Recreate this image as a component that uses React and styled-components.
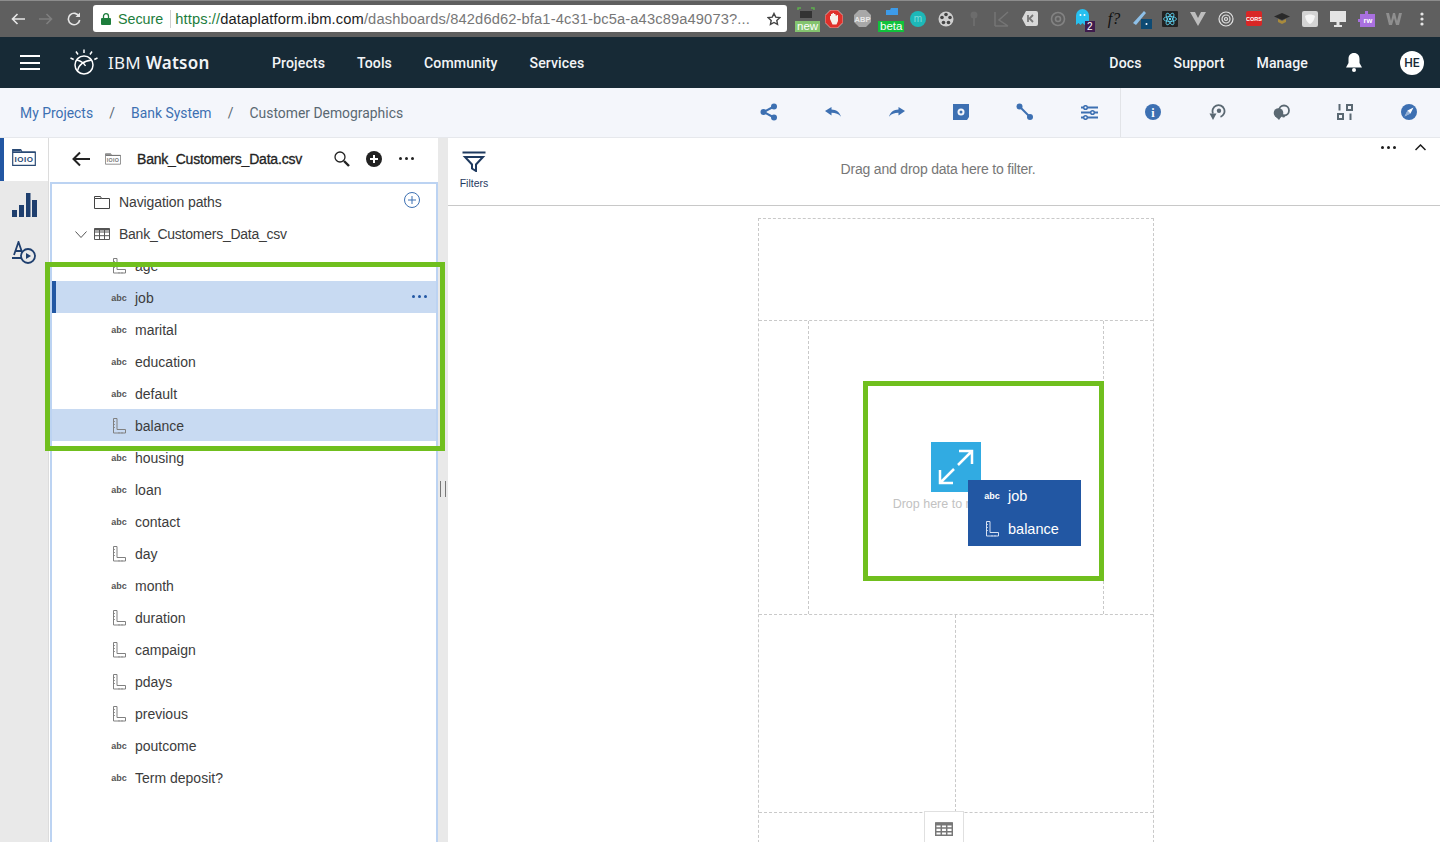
import React from "react";
import styled, { createGlobalStyle } from "styled-components";

const GlobalStyle = createGlobalStyle`
  html, body {
    margin: 0;
    height: 100%;
    overflow: hidden;
    background: #fff;
  }
  * { box-sizing: border-box; }
`;

const Page = styled.div`
  width: 1440px;
  height: 842px;
  display: flex;
  flex-direction: column;
  overflow: hidden;
  font-family: "Liberation Sans", Arial, sans-serif;
`;

/* browser chrome */
const Chrome = styled.div`
  height: 37px;
  flex: none;
  display: flex;
  align-items: center;
  padding: 0 4px 1px 4px;
  background: #5f5f5f;
  border-top: 1px solid #8c8c8c;
`;

const ChromeButton = styled.div`
  width: 28px;
  height: 28px;
  display: flex;
  align-items: center;
  justify-content: center;
  color: ${(p) => (p.$dim ? "#7f7f7f" : "#e6e6e6")};
`;

const UrlBar = styled.div`
  width: 695px;
  height: 27px;
  margin-left: 5px;
  margin-right: 5px;
  padding: 0 6px 0 8px;
  display: flex;
  align-items: center;
  background: #fff;
  border-radius: 3px;
  white-space: nowrap;
`;

const Secure = styled.span`
  color: #1d7d3c;
  margin-left: 7px;
  padding-right: 7px;
  border-right: 1px solid #cfcfcf;
  font-size: 14.3px;
  line-height: 18px;
`;

const Url = styled.span`
  margin-left: 4px;
  flex: 1;
  overflow: hidden;
  color: #777;
  font-size: 14.7px;
  letter-spacing: 0.12px;
`;

const UrlScheme = styled.span`
  color: #1d7d3c;
`;

const UrlHost = styled.span`
  color: #1c1c1c;
`;

const Extensions = styled.div`
  display: flex;
  align-items: center;
`;

const Ext = styled.div`
  width: 28px;
  height: 28px;
  display: flex;
  align-items: center;
  justify-content: center;
  position: relative;
`;

const ExtTag = styled.span`
  position: absolute;
  left: ${(p) => p.$left}px;
  bottom: 1px;
  padding: 0 2px;
  height: ${(p) => p.$h || 11}px;
  line-height: ${(p) => p.$h || 11}px;
  font-size: ${(p) => p.$size || 11.5}px;
  color: #fff;
  background: ${(p) => p.$bg};
`;

/* nav */
const Nav = styled.header`
  height: 51px;
  flex: none;
  display: flex;
  align-items: center;
  background: #172a36;
  color: #f2f4f6;
  font-family: Roboto, sans-serif;
`;

const Burger = styled.div`
  width: 20px;
  height: 15px;
  margin-left: 20px;
  margin-right: 29px;
  border-top: 2px solid #fff;
  border-bottom: 2px solid #fff;
  display: flex;
  align-items: center;
  &::before {
    content: "";
    display: block;
    width: 100%;
    height: 2px;
    background: #fff;
  }
`;

const Brand = styled.div`
  margin-left: 9px;
  width: 164px;
  font-family: "Noto Sans", sans-serif;
  font-size: 17px;
  font-weight: 400;
  letter-spacing: 0.25px;
  white-space: nowrap;
  b { font-weight: 600; }
`;

const NavLinks = styled.nav`
  display: flex;
  gap: 32px;
  font-size: 14.1px;
  font-weight: 500;
  letter-spacing: 0.1px;
  ${(p) => p.$right && "margin-left: auto;"}
`;

const Bell = styled.div`
  margin-left: 36px;
  width: 20px;
  display: flex;
  justify-content: center;
`;

const Avatar = styled.div`
  width: 24px;
  height: 24px;
  margin-left: 36px;
  margin-right: 16px;
  border-radius: 50%;
  background: #fff;
  color: #172a36;
  font-size: 12px;
  font-weight: 500;
  display: flex;
  align-items: center;
  justify-content: center;
`;

/* breadcrumb */
const CrumbBar = styled.div`
  height: 50px;
  flex: none;
  display: flex;
  align-items: center;
  padding-left: 20px;
  background: #f4f6fb;
  border-bottom: 1px solid #e6e8ec;
  font-family: Roboto, sans-serif;
  font-size: 13.9px;
`;

const Crumb = styled.span`
  color: ${(p) => (p.$current ? "#5a6872" : "#3d70b2")};
  white-space: nowrap;
`;

const CrumbSep = styled.span`
  color: #5a6872;
  width: 38px;
  text-align: center;
`;

const Toolbar = styled.div`
  margin-left: auto;
  margin-right: -1px;
  display: flex;
  height: 100%;
`;

const ToolGroup = styled.div`
  display: flex;
  ${(p) => p.$divided && "box-shadow: inset -1px 0 0 #e2e4e8;"}
`;

const ToolButton = styled.div`
  width: 64px;
  flex: none;
  display: flex;
  align-items: center;
  justify-content: center;
  padding-bottom: 1px;
  color: ${(p) => (p.$muted ? "#5a6872" : "#3d70b2")};
`;

/* body */
const Body = styled.div`
  flex: 1;
  min-height: 0;
  display: flex;
`;

const Rail = styled.div`
  width: 49px;
  flex: none;
  background: #e9e9e9;
  border-right: 1px solid #dcdcdc;
  display: flex;
  flex-direction: column;
`;

const RailItem = styled.div`
  height: ${(p) => p.$h}px;
  display: flex;
  align-items: center;
  justify-content: center;
  color: #1f3f6e;
  ${(p) => p.$active && `background: #fff; border-left: 4px solid #2257a3; padding: 0 4px 4px 0;`}
`;

const Panel = styled.aside`
  width: 389px;
  flex: none;
  position: relative;
  display: flex;
  flex-direction: column;
  background: #fff;
`;

const PanelHead = styled.div`
  height: 44px;
  flex: none;
  padding-bottom: 3px;
  display: flex;
  align-items: center;
  color: #222;
`;

const HeadIcon = styled.div`
  width: 32px;
  display: flex;
  justify-content: center;
  margin-left: ${(p) => p.$ml || 0}px;
`;

const FileName = styled.div`
  width: 189px;
  margin-left: 8px;
  font-size: 14px;
  letter-spacing: -0.2px;
  -webkit-text-stroke: 0.3px #222;
  white-space: nowrap;
  color: #222;
`;

const Tree = styled.div`
  flex: 1;
  margin-left: 1px;
  padding-top: 1px;
  border: 2px solid #bcd3f2;
  border-bottom: 0;
`;

const Row = styled.div`
  height: 32px;
  padding-top: 2px;
  position: relative;
  display: flex;
  align-items: center;
  color: #3c3c3c;
  font-size: 14px;
  background: ${(p) => (p.$selected ? "#c8daf2" : "transparent")};
  ${(p) => p.$marked && "box-shadow: inset 4px 0 0 #2257a3;"}
`;

const RowIcon = styled.div`
  width: ${(p) => p.$w || 24}px;
  margin-left: ${(p) => p.$ml}px;
  flex: none;
  display: flex;
  justify-content: center;
  color: #777;
`;

const TypeLabel = styled.span`
  font-size: 9px;
  font-weight: 700;
  color: ${(p) => (p.$light ? "#fff" : "#555")};
`;

const FieldName = styled.span`
  margin-left: ${(p) => p.$ml}px;
  letter-spacing: ${(p) => p.$track || 0}px;
`;

const RowAction = styled.div`
  margin-left: auto;
  margin-right: ${(p) => p.$mr}px;
  margin-bottom: ${(p) => p.$mb || 0}px;
  display: flex;
  color: #2257a3;
`;

const Highlight = styled.div`
  position: absolute;
  z-index: 2;
  border: 5px solid #70bf1e;
  pointer-events: none;
  left: ${(p) => p.$left}px;
  top: ${(p) => p.$top}px;
  width: ${(p) => p.$width}px;
  height: ${(p) => p.$height}px;
`;

const Splitter = styled.div`
  width: 10px;
  flex: none;
  background: #e9e9e9;
  display: flex;
  align-items: center;
  justify-content: center;
  &::before {
    content: "";
    width: 4px;
    height: 16px;
    border-left: 1px solid #777;
    border-right: 1px solid #777;
    position: relative;
    top: -1px;
  }
`;

const Main = styled.main`
  flex: 1;
  min-width: 0;
  display: flex;
  flex-direction: column;
  background: #fff;
`;

const FilterBar = styled.div`
  height: 68px;
  flex: none;
  display: flex;
  border-bottom: 1px solid #c8c8c8;
`;

const FilterButton = styled.div`
  width: 52px;
  padding-top: 13px;
  display: flex;
  flex-direction: column;
  align-items: center;
  gap: 5px;
  font-size: 10.5px;
  color: #1f3a5f;
`;

const FilterHint = styled.div`
  flex: 1;
  padding-top: 23px;
  text-align: center;
  font-size: 14px;
  letter-spacing: -0.2px;
  color: #777;
`;

const FilterActions = styled.div`
  display: flex;
  gap: 8px;
  padding: 6px 8px 0 0;
  height: 13px;
`;

const ActionIcon = styled.div`
  width: 24px;
  height: 7px;
  display: flex;
  align-items: center;
  justify-content: center;
  color: #1c1c1c;
`;

const Canvas = styled.div`
  flex: 1;
  min-height: 0;
  overflow: hidden;
  padding: 12px 0 0 310px;
`;

const Template = styled.div`
  width: 396px;
  height: 640px;
  display: flex;
  flex-direction: column;
  border: 1px dashed #c9c9c9;
  border-bottom: 0;
`;

const TemplateRow = styled.div`
  height: ${(p) => p.$h}px;
  flex: none;
  display: flex;
  position: relative;
  ${(p) => p.$ruled && "border-top: 1px dashed #c9c9c9;"}
`;

const Cell = styled.div`
  position: relative;
  flex: ${(p) => (p.$w ? `0 0 ${p.$w}px` : "1")};
  ${(p) => p.$ruled && "border-left: 1px dashed #c9c9c9;"}
`;

const CenterCell = styled(Cell)`
  display: flex;
  flex-direction: column;
  align-items: center;
  padding: 121px 1px 0 0;
  gap: 5px;
`;

const MaximizeBox = styled.div`
  width: 50px;
  height: 50px;
  display: flex;
  align-items: center;
  justify-content: center;
  background: #31abe2;
`;

const DropText = styled.div`
  font-size: 12.5px;
  color: #c2c2c2;
  white-space: nowrap;
`;

const DragGhost = styled.div`
  position: absolute;
  left: 159px;
  top: 159px;
  width: 113px;
  height: 66px;
  background: #2257a3;
  color: #fff;
  font-size: 14.5px;
`;

const GhostRow = styled.div`
  height: 33px;
  padding-bottom: 2px;
  display: flex;
  align-items: center;
`;

const TableTab = styled.div`
  position: absolute;
  left: 165px;
  top: -2px;
  width: 40px;
  height: 34px;
  background: #fff;
  border: 1px solid #e0e0e0;
  border-bottom: 0;
  display: flex;
  align-items: center;
  justify-content: center;
`;

/* icons */
const Dots = ({ size = 3, gap = 3 }) => (
  <svg width={size * 3 + gap * 2} height={size} fill="currentColor">
    {[0, 1, 2].map((i) => (
      <circle key={i} cx={size / 2 + i * (size + gap)} cy={size / 2} r={size / 2} />
    ))}
  </svg>
);

const FieldIcon = ({ color = "#808080" }) => (
  <svg width="13" height="16" viewBox="0 0 13 16" fill="none" stroke={color} strokeWidth="1">
    <path d="M.5.5h3.500v11h8.500v3.500h-12z" />
    <path d="M.5 3.500h1.500M.5 6.500h1.500M.5 9.500h1.500M6 15.500V14M9 15.500V14" strokeWidth=".8" />
  </svg>
);

const FolderData = ({ color, w = 24, h = 17 }) => (
  <svg width={w} height={h} viewBox="0 0 24 17" fill="none" stroke={color}>
    <path d="M.7 3V.7h8L10 3h13.300v13.300H.7z" fill="#fff" strokeWidth="1.200" />
    <path d="M.7 3.200h22.600M.7 1.500h8" strokeWidth="1.600" />
    <text x="12" y="13" textAnchor="middle" fontFamily="Liberation Sans, sans-serif" fontSize="8" fontWeight="700" letterSpacing=".5" fill={color} stroke="none">IOIO</text>
  </svg>
);

const Share = () => (
  <svg width="18" height="18" viewBox="0 0 18 18" fill="currentColor">
    <circle cx="14" cy="3.500" r="3" /><circle cx="3.500" cy="9" r="3" /><circle cx="14" cy="14.500" r="3" />
    <path d="M14 3.500 3.500 9 14 14.500" fill="none" stroke="currentColor" strokeWidth="2" />
  </svg>
);

const Reply = ({ flip }) => (
  <svg width="16" height="10" viewBox="0 0 16 10" fill="currentColor" style={flip ? { transform: "scaleX(-1)" } : undefined}>
    <path d="M0 4 6.500 0v2.600c4.600.2 8 2.200 9.500 7.200-2.400-3-5.300-4-9.500-4V8.500z" />
  </svg>
);

const CameraBox = () => (
  <svg width="16" height="16" viewBox="0 0 16 16" fill="currentColor">
    <path d="M0 0h16v13l-2 3H0z" />
    <circle cx="8" cy="8" r="3.500" fill="#f4f6fb" /><circle cx="8" cy="8" r="1.500" />
  </svg>
);

const Connect = () => (
  <svg width="18" height="18" viewBox="0 0 18 18" fill="currentColor">
    <circle cx="3.500" cy="3.500" r="3" /><circle cx="14" cy="14" r="3" />
    <path d="M3.500 3.500 14 14" stroke="currentColor" strokeWidth="2" />
  </svg>
);

const Sliders = () => (
  <svg width="17" height="15" viewBox="0 0 17 15" fill="none" stroke="currentColor" strokeWidth="1.800">
    <path d="M0 2.500h17M0 7.500h17M0 12.500h17" />
    <g fill="#f4f6fb" strokeWidth="1.500"><circle cx="4.500" cy="2.500" r="1.800" /><circle cx="11.500" cy="7.500" r="1.800" /><circle cx="4.500" cy="12.500" r="1.800" /></g>
  </svg>
);

const Info = () => (
  <svg width="16" height="16" viewBox="0 0 16 16">
    <circle cx="8" cy="8" r="8" fill="currentColor" />
    <text x="8" y="12.500" textAnchor="middle" fontFamily="Liberation Serif, serif" fontWeight="700" fontSize="12" fill="#fff">i</text>
  </svg>
);

const Rewind = () => (
  <svg width="17" height="16" viewBox="0 0 17 16" fill="none" stroke="currentColor" strokeWidth="1.800">
    <path d="M4 9.500a6 6 0 1 1 7.500 3.300" />
    <circle cx="10" cy="6.800" r="2.200" fill="currentColor" stroke="none" />
    <path d="M.5 9.500h7L4 16z" fill="currentColor" stroke="none" />
  </svg>
);

const Bubble = () => (
  <svg width="17" height="16" viewBox="0 0 17 16" fill="currentColor">
    <circle cx="11" cy="6.500" r="5" fill="none" stroke="currentColor" strokeWidth="1.800" />
    <circle cx="5.500" cy="9" r="4.800" />
    <path d="M3 13h5l-2 3z" />
    <circle cx="10.500" cy="12" r="1.500" />
  </svg>
);

const BinaryGrid = () => (
  <svg width="16" height="16" viewBox="0 0 16 16" fill="none" stroke="currentColor" strokeWidth="2">
    <path d="M2.500 0v6.500" /><rect x="10" y="1" width="5" height="5" />
    <rect x="1" y="10" width="5" height="5" /><path d="M13.500 9.500V16" />
  </svg>
);

const Compass = () => (
  <svg width="16" height="16" viewBox="0 0 16 16">
    <circle cx="8" cy="8" r="8" fill="currentColor" />
    <path d="M12.500 3.500 9.500 9.500 3.500 12.500 6.500 6.500z" fill="#fff" />
    <path d="M9.500 9.500 3.500 12.500 6.500 6.500z" fill="currentColor" opacity=".55" />
  </svg>
);

const WatsonLogo = () => (
  <svg width="30" height="30" viewBox="0 0 30 30" fill="none" stroke="#fff" strokeWidth="1.500">
    <circle cx="15" cy="17" r="9" />
    <path d="M8.500 23c1-6 6-10 14.500-11" strokeWidth="1.300" />
    <path d="M8 12c4 1 7 3 8.500 6" strokeWidth="1.300" />
    <path d="M15 1.500v3.500M7 3.500l2 3M23 3.500l-2 3M1.500 10l3.200 1.500M28.500 10l-3.200 1.500" />
  </svg>
);

const Lock = () => (
  <svg width="10" height="12" viewBox="0 0 10 12" fill="#1d7d3c">
    <rect y="5" width="10" height="7" rx="1" />
    <path d="M2.500 5V3.200a2.500 2.500 0 0 1 5 0V5" fill="none" stroke="#1d7d3c" strokeWidth="1.300" />
  </svg>
);

const Extension = ({ id }) => {
  switch (id) {
    case "new":
      return (
        <Ext>
          <svg width="18" height="11" viewBox="0 0 18 11" style={{ marginBottom: 12 }}>
            <path d="M3 4h12v7H3z" fill="#333" /><path d="M1 3V1h3M17 3V1h-3" stroke="#5fae4f" strokeWidth="1.500" fill="none" />
          </svg>
          <ExtTag $left={3} $bg="#84c46f">new</ExtTag>
        </Ext>
      );
    case "stop":
      return (
        <Ext>
          <svg width="18" height="18" viewBox="0 0 18 18">
            <path d="M5.500 0h7L18 5.500v7L12.500 18h-7L0 12.500v-7z" fill="#e0302a" stroke="#e6e6e6" strokeWidth=".6" />
            <path d="M5 9V6h1V4h1.500V3H9v1h1.500v1.500H12V5h1v6l-1.500 3.500H7.500z" fill="#f6f0ea" />
          </svg>
        </Ext>
      );
    case "abp":
      return (
        <Ext>
          <svg width="17" height="17" viewBox="0 0 17 17">
            <path d="M5 0h7l5 5v7l-5 5H5l-5-5V5z" fill="#a8a8a8" />
            <text x="8.500" y="11.500" textAnchor="middle" fontFamily="Liberation Sans, sans-serif" fontSize="7.500" fontWeight="700" fill="#e8e8e8">ABP</text>
          </svg>
        </Ext>
      );
    case "beta":
      return (
        <Ext>
          <svg width="12" height="7" viewBox="0 0 12 7" style={{ marginBottom: 14, marginLeft: 4 }}>
            <path d="M0 7V2h4l1-2h7v7z" fill="#3d9be9" />
          </svg>
          <ExtTag $left={2} $bg="#11c23c">beta</ExtTag>
        </Ext>
      );
    case "m":
      return (
        <Ext>
          <svg width="16" height="16" viewBox="0 0 16 16">
            <circle cx="8" cy="8" r="8" fill="#1db8b8" />
            <text x="8" y="11" textAnchor="middle" fontFamily="Liberation Sans, sans-serif" fontSize="10" fill="#7fdcdc">m</text>
          </svg>
        </Ext>
      );
    case "film":
      return (
        <Ext>
          <svg width="16" height="16" viewBox="0 0 16 16">
            <circle cx="8" cy="8" r="7.500" fill="#cfcfcf" />
            {[[8, 3.500], [12, 6.500], [10.500, 11.500], [5.500, 11.500], [4, 6.500]].map(([x, y]) => (
              <circle key={x + "" + y} cx={x} cy={y} r="1.800" fill="#444" />
            ))}
          </svg>
        </Ext>
      );
    case "faint":
      return (
        <Ext>
          <svg width="8" height="15" viewBox="0 0 8 15" fill="#6c6c6c">
            <circle cx="4" cy="4" r="3.500" /><path d="M3 6h2v9H3z" />
          </svg>
        </Ext>
      );
    case "k":
      return (
        <Ext>
          <svg width="16" height="16" viewBox="0 0 16 16" fill="none" stroke="#767676" strokeWidth="1.500">
            <path d="M1 1v14M14 1 5 9l9 6M1 15h13" />
          </svg>
        </Ext>
      );
    case "kw":
      return (
        <Ext>
          <svg width="16" height="15" viewBox="0 0 16 15">
            <path d="M4 0h10a2 2 0 0 1 2 2v11a2 2 0 0 1-2 2H4L0 7.500z" fill="#d8d8d8" />
            <path d="M6 4v7M11 4 7.500 7.500 11 11" stroke="#777" strokeWidth="1.800" fill="none" />
          </svg>
        </Ext>
      );
    case "ring":
      return (
        <Ext>
          <svg width="16" height="16" viewBox="0 0 16 16" fill="none" stroke="#838383" strokeWidth="1.600">
            <circle cx="8" cy="8" r="6.500" /><circle cx="8" cy="8" r="2.500" />
          </svg>
        </Ext>
      );
    case "ghost":
      return (
        <Ext>
          <svg width="13" height="16" viewBox="0 0 13 16" style={{ marginRight: 7, marginBottom: 3 }}>
            <path d="M0 16V6.500a6.500 6.500 0 0 1 13 0V16l-2.500-2-2 2-2-2-2 2-2-2z" fill="#27c0f0" />
            <circle cx="4.500" cy="6" r="1" fill="#fff" /><circle cx="8.500" cy="6" r="1" fill="#fff" />
          </svg>
          <ExtTag $left={13} $bg="#3e1b4d" $size={10}>2</ExtTag>
        </Ext>
      );
    case "f":
      return (
        <Ext>
          <svg width="18" height="18" viewBox="0 0 18 18">
            <text x="9" y="14" textAnchor="middle" fontFamily="Liberation Serif, serif" fontStyle="italic" fontSize="16" fill="#111">f?</text>
          </svg>
        </Ext>
      );
    case "pen":
      return (
        <Ext>
          <svg width="19" height="20" viewBox="0 0 19 20">
            <path d="M0 14 11 2l2 2L3 16z" fill="#8ec0e8" />
            <rect x="8" y="10" width="11" height="10" fill="#0e4a73" />
            <circle cx="13.500" cy="15" r="1" fill="#fff" />
          </svg>
        </Ext>
      );
    case "react":
      return (
        <Ext>
          <svg width="16" height="16" viewBox="0 0 16 16" fill="none" stroke="#61dafb" strokeWidth=".8">
            <rect width="16" height="16" rx="1" fill="#222" stroke="none" />
            <ellipse cx="8" cy="8" rx="6.500" ry="2.500" />
            <ellipse cx="8" cy="8" rx="6.500" ry="2.500" transform="rotate(60 8 8)" />
            <ellipse cx="8" cy="8" rx="6.500" ry="2.500" transform="rotate(120 8 8)" />
            <circle cx="8" cy="8" r="1.200" fill="#61dafb" stroke="none" />
          </svg>
        </Ext>
      );
    case "v":
      return (
        <Ext>
          <svg width="16" height="14" viewBox="0 0 16 14">
            <path d="M0 0h5l3 6 3-6h5L8 14z" fill="#bdbdbd" />
          </svg>
        </Ext>
      );
    case "target":
      return (
        <Ext>
          <svg width="16" height="16" viewBox="0 0 16 16" fill="none" stroke="#e2e2e2" strokeWidth="1.200">
            <circle cx="8" cy="8" r="7" /><circle cx="8" cy="8" r="4" /><circle cx="8" cy="8" r="1.500" />
          </svg>
        </Ext>
      );
    case "cors":
      return (
        <Ext>
          <svg width="16" height="15" viewBox="0 0 16 15">
            <rect width="16" height="15" rx="2" fill="#d92626" />
            <text x="8" y="10" textAnchor="middle" fontFamily="Liberation Sans, sans-serif" fontSize="5.500" fontWeight="700" fill="#fff">CORS</text>
          </svg>
        </Ext>
      );
    case "cap":
      return (
        <Ext>
          <svg width="16" height="11" viewBox="0 0 16 11">
            <path d="M8 0l8 3.500L8 7 0 3.500z" fill="#2a2a2a" /><path d="M4 6v3l4 2 4-2V6L8 8z" fill="#a88a3c" />
          </svg>
        </Ext>
      );
    case "square":
      return (
        <Ext>
          <svg width="16" height="16" viewBox="0 0 16 16">
            <rect width="16" height="16" rx="2" fill="#d4d4d4" />
            <path d="M3 5c3-2 7-2 10 0-1 5-3 7-5 8-2-1-4-3-5-8z" fill="#f5f5f5" />
          </svg>
        </Ext>
      );
    case "monitor":
      return (
        <Ext>
          <svg width="16" height="16" viewBox="0 0 16 16" fill="#e4e4e4">
            <path d="M0 0h16v11H0zM6.500 11h3v3h-3zM4 14h8v2H4z" />
          </svg>
        </Ext>
      );
    case "puzzle":
      return (
        <Ext>
          <svg width="17" height="17" viewBox="0 0 17 17">
            <path d="M2 4h5V1h3v3h7v13H2v-5H0V9h2z" fill="#a970e0" />
            <text x="10" y="13" textAnchor="middle" fontFamily="Liberation Sans, sans-serif" fontSize="7.500" fontWeight="700" fill="#fff">rw</text>
          </svg>
        </Ext>
      );
    case "w":
      return (
        <Ext>
          <svg width="16" height="12" viewBox="0 0 16 12" fill="#8f8f8f">
            <path d="M0 0h3l2 8 2-8h2l2 8 2-8h3l-3 12h-3L8 5l-2 7H3z" />
          </svg>
        </Ext>
      );
    default:
      return (
        <Ext>
          <svg width="4" height="14" viewBox="0 0 4 14" fill="#e6e6e6">
            <circle cx="2" cy="2" r="1.600" /><circle cx="2" cy="7" r="1.600" /><circle cx="2" cy="12" r="1.600" />
          </svg>
        </Ext>
      );
  }
};

const extensionIds = [
  "new", "stop", "abp", "beta", "m", "film", "faint", "k", "kw", "ring", "ghost", "f",
  "pen", "react", "v", "target", "cors", "cap", "square", "monitor", "puzzle", "w", "menu",
];

const fields = [
  { name: "age", num: true },
  { name: "job", selected: true, marked: true },
  { name: "marital" },
  { name: "education" },
  { name: "default" },
  { name: "balance", num: true, selected: true },
  { name: "housing" },
  { name: "loan" },
  { name: "contact" },
  { name: "day", num: true },
  { name: "month" },
  { name: "duration", num: true },
  { name: "campaign", num: true },
  { name: "pdays", num: true },
  { name: "previous", num: true },
  { name: "poutcome" },
  { name: "Term deposit?" },
];

export default function App() {
  return (
    <Page>
      <GlobalStyle />
      <Chrome>
        <ChromeButton>
          <svg width="14" height="12" viewBox="0 0 14 12" fill="none" stroke="currentColor" strokeWidth="1.600"><path d="M14 6H1.500M6.500 1l-5 5 5 5" /></svg>
        </ChromeButton>
        <ChromeButton $dim>
          <svg width="14" height="12" viewBox="0 0 14 12" fill="none" stroke="currentColor" strokeWidth="1.600"><path d="M0 6h12.500M7.500 1l5 5-5 5" /></svg>
        </ChromeButton>
        <ChromeButton>
          <svg width="14" height="14" viewBox="0 0 14 14" fill="none" stroke="currentColor" strokeWidth="1.600"><path d="M12.200 4.500A5.700 5.700 0 1 0 12.700 8" /><path d="M13 .5v4.500H8.500" fill="currentColor" stroke="none" /></svg>
        </ChromeButton>
        <UrlBar>
          <Lock />
          <Secure>Secure</Secure>
          <Url>
            <UrlScheme>https://</UrlScheme>
            <UrlHost>dataplatform.ibm.com</UrlHost>/dashboards/842d6d62-bfa1-4c31-bc5a-a43c89a49073?...
          </Url>
          <svg width="14" height="14" viewBox="0 0 24 24" fill="none" stroke="#444" strokeWidth="2.400"><path d="m12 2.500 3 6.300 6.800.9-5 4.700 1.300 6.800-6.100-3.300-6.100 3.300 1.300-6.800-5-4.700 6.800-.9z" /></svg>
        </UrlBar>
        <Extensions>
          {extensionIds.map((id) => (
            <Extension key={id} id={id} />
          ))}
        </Extensions>
      </Chrome>

      <Nav>
        <Burger />
        <WatsonLogo />
        <Brand>IBM <b>Watson</b></Brand>
        <NavLinks>
          <span>Projects</span>
          <span>Tools</span>
          <span>Community</span>
          <span>Services</span>
        </NavLinks>
        <NavLinks $right>
          <span>Docs</span>
          <span>Support</span>
          <span>Manage</span>
        </NavLinks>
        <Bell>
          <svg width="16" height="19" viewBox="0 0 16 19" fill="#fff"><path d="M8 0c3.500 0 5.500 2.500 5.500 6v4l2.500 4.500H0L2.500 10V6C2.500 2.500 4.500 0 8 0z" /><circle cx="8" cy="17" r="2" /></svg>
        </Bell>
        <Avatar>HE</Avatar>
      </Nav>

      <CrumbBar>
        <Crumb>My Projects</Crumb>
        <CrumbSep>/</CrumbSep>
        <Crumb>Bank System</Crumb>
        <CrumbSep>/</CrumbSep>
        <Crumb $current>Customer Demographics</Crumb>
        <Toolbar>
          <ToolGroup $divided>
            <ToolButton><Share /></ToolButton>
            <ToolButton><Reply /></ToolButton>
            <ToolButton><Reply flip /></ToolButton>
            <ToolButton><CameraBox /></ToolButton>
            <ToolButton><Connect /></ToolButton>
            <ToolButton><Sliders /></ToolButton>
          </ToolGroup>
          <ToolGroup>
            <ToolButton><Info /></ToolButton>
            <ToolButton $muted><Rewind /></ToolButton>
            <ToolButton $muted><Bubble /></ToolButton>
            <ToolButton $muted><BinaryGrid /></ToolButton>
            <ToolButton><Compass /></ToolButton>
          </ToolGroup>
        </Toolbar>
      </CrumbBar>

      <Body>
        <Rail>
          <RailItem $active $h={43}>
            <FolderData color="#2a4a75" />
          </RailItem>
          <RailItem $h={48}>
            <svg width="25" height="24" viewBox="0 0 25 24" fill="currentColor"><path d="M0 17h5v7H0zM7 12h5v12H7zM14 0h4.500v24H14zM20 7h5v17h-5z" /></svg>
          </RailItem>
          <RailItem $h={48}>
            <svg width="24" height="24" viewBox="0 0 24 24" fill="none" stroke="currentColor" strokeWidth="1.800">
              <path d="M2 14 6.500 1 11 14M3.500 10h6M0 17h10" />
              <circle cx="16" cy="15" r="7" fill="#e9e9e9" />
              <path d="m14 12 5 3-5 3z" fill="currentColor" stroke="none" />
            </svg>
          </RailItem>
        </Rail>

        <Panel>
          <PanelHead>
            <HeadIcon $ml={16}>
              <svg width="18" height="16" viewBox="0 0 18 16" fill="none" stroke="currentColor" strokeWidth="2"><path d="M18 8H2M8 1.500 1.500 8 8 14.500" /></svg>
            </HeadIcon>
            <HeadIcon>
              <FolderData color="#777" w={16} h={12} />
            </HeadIcon>
            <FileName>Bank_Customers_Data.csv</FileName>
            <HeadIcon>
              <svg width="18" height="18" viewBox="0 0 18 18" fill="none" stroke="currentColor"><circle cx="7" cy="7" r="5" strokeWidth="1.300" /><path d="m11 11 5 5" strokeWidth="2.400" /></svg>
            </HeadIcon>
            <HeadIcon>
              <svg width="16" height="16" viewBox="0 0 16 16"><circle cx="8" cy="8" r="8" fill="#222" /><path d="M8 4v8M4 8h8" stroke="#fff" strokeWidth="2" /></svg>
            </HeadIcon>
            <HeadIcon>
              <Dots />
            </HeadIcon>
          </PanelHead>
          <Tree>
            <Row>
              <RowIcon $ml={41} $w={18}>
                <svg width="16" height="13" viewBox="0 0 16 13" fill="none" stroke="#444"><path d="M.5 2.500V.5h6l1 2h8v10H.5zM.5 2.500h7" /></svg>
              </RowIcon>
              <FieldName $ml={8} $track={-0.1}>Navigation paths</FieldName>
              <RowAction $mr={16} $mb={4}>
                <svg width="16" height="16" viewBox="0 0 16 16" fill="none" stroke="#3d70b2"><circle cx="8" cy="8" r="7.500" /><path d="M8 4v8M4 8h8" /></svg>
              </RowAction>
            </Row>
            <Row>
              <RowIcon $ml={22} $w={14}>
                <svg width="12" height="7" viewBox="0 0 12 7" fill="none" stroke="#555"><path d="m.5.500 5.500 6 5.500-6" /></svg>
              </RowIcon>
              <RowIcon $ml={5} $w={18}>
                <svg width="16" height="12" viewBox="0 0 16 12" fill="none" stroke="#555"><path d="M.5.500h15v11H.5zM.5 4h15M.5 7.700h15M5.500.5v11M10.500.5v11" /><path d="M.5 1.500h15" strokeWidth="2" /></svg>
              </RowIcon>
              <FieldName $ml={8} $track={-0.25}>Bank_Customers_Data_csv</FieldName>
            </Row>
            {fields.map((f) => (
              <Row key={f.name} $selected={f.selected} $marked={f.marked}>
                <RowIcon $ml={55} $w={24}>
                  {f.num ? <FieldIcon /> : <TypeLabel>abc</TypeLabel>}
                </RowIcon>
                <FieldName $ml={4}>{f.name}</FieldName>
                {f.marked && (
                  <RowAction $mr={9} $mb={4}>
                    <Dots />
                  </RowAction>
                )}
              </Row>
            ))}
          </Tree>
          <Highlight $left={-4} $top={124} $width={400} $height={189} />
        </Panel>

        <Splitter />

        <Main>
          <FilterBar>
            <FilterButton>
              <svg width="24" height="21" viewBox="0 0 24 21" fill="none" stroke="#1f3a5f" strokeWidth="2"><path d="M.5 1.500h23" /><path d="M3 6h18l-7 7.500V20l-4-2.500v-4z" /></svg>
              Filters
            </FilterButton>
            <FilterHint>Drag and drop data here to filter.</FilterHint>
            <FilterActions>
              <ActionIcon><Dots /></ActionIcon>
              <ActionIcon>
                <svg width="11" height="7" viewBox="0 0 11 7" fill="none" stroke="currentColor" strokeWidth="1.500"><path d="m.5 6 5-5 5 5" /></svg>
              </ActionIcon>
            </FilterActions>
          </FilterBar>
          <Canvas>
            <Template>
              <TemplateRow $h={101} />
              <TemplateRow $h={294} $ruled>
                <Cell $w={49} />
                <CenterCell $w={295} $ruled>
                  <MaximizeBox>
                    <svg width="38" height="38" viewBox="0 0 38 38" fill="none" stroke="#fff" strokeWidth="2.500"><path d="M22 3h13v13M35 3 21 17M3 22v13h13M3 35l14-14" /></svg>
                  </MaximizeBox>
                  <DropText>Drop here to maximize</DropText>
                  <DragGhost>
                    <GhostRow>
                      <RowIcon $ml={12} $w={24}><TypeLabel $light>abc</TypeLabel></RowIcon>
                      <FieldName $ml={4}>job</FieldName>
                    </GhostRow>
                    <GhostRow>
                      <RowIcon $ml={12} $w={24}><FieldIcon color="#d5e0f2" /></RowIcon>
                      <FieldName $ml={4}>balance</FieldName>
                    </GhostRow>
                  </DragGhost>
                  <Highlight $left={54} $top={60} $width={241} $height={200} />
                </CenterCell>
                <Cell $ruled />
              </TemplateRow>
              <TemplateRow $h={198} $ruled>
                <Cell $w={196} />
                <Cell $ruled />
              </TemplateRow>
              <TemplateRow $h={40} $ruled>
                <TableTab>
                  <svg width="18" height="14" viewBox="0 0 18 14" fill="none" stroke="#777" strokeWidth="1.500"><path d="M.7 1h16.600v12.300H.7zM.7 6h16.600M.7 9.700h16.600M6.300 1v12.300M11.700 1v12.300" /><path d="M.7 2h16.600" strokeWidth="3" /></svg>
                </TableTab>
              </TemplateRow>
            </Template>
          </Canvas>
        </Main>
      </Body>
    </Page>
  );
}
